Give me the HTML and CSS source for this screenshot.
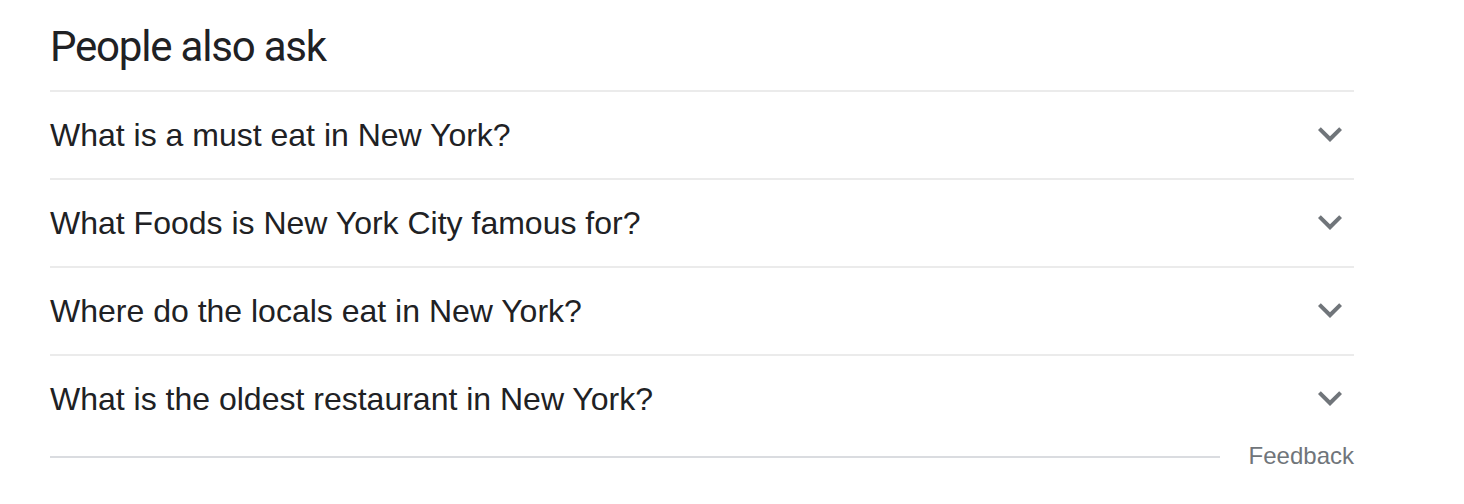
FILE: index.html
```html
<!DOCTYPE html>
<html>
<head>
<meta charset="utf-8">
<link rel="stylesheet" href="styles.css">
</head>
<body>
<div class="paa">
  <h2 class="paa-title">People also ask</h2>
  <div class="paa-list">
    <div class="paa-row">
      <span class="paa-q">What is a must eat in New York?</span>
      <svg class="chev" viewBox="0 0 24 24" width="48" height="48"><path d="M16.59 8.59L12 13.17 7.41 8.59 6 10l6 6 6-6z"/></svg>
    </div>
    <div class="paa-row">
      <span class="paa-q">What Foods is New York City famous for?</span>
      <svg class="chev" viewBox="0 0 24 24" width="48" height="48"><path d="M16.59 8.59L12 13.17 7.41 8.59 6 10l6 6 6-6z"/></svg>
    </div>
    <div class="paa-row">
      <span class="paa-q">Where do the locals eat in New York?</span>
      <svg class="chev" viewBox="0 0 24 24" width="48" height="48"><path d="M16.59 8.59L12 13.17 7.41 8.59 6 10l6 6 6-6z"/></svg>
    </div>
    <div class="paa-row">
      <span class="paa-q">What is the oldest restaurant in New York?</span>
      <svg class="chev" viewBox="0 0 24 24" width="48" height="48"><path d="M16.59 8.59L12 13.17 7.41 8.59 6 10l6 6 6-6z"/></svg>
    </div>
  </div>
  <div class="paa-foot">
    <div class="foot-line"></div>
    <span class="feedback">Feedback</span>
  </div>
</div>
</body>
</html>
```
FILE: styles.css
```css
html, body {
  margin: 0;
  padding: 0;
  background: #fff;
}
.paa {
  width: 1304px;
  margin-left: 50px;
  font-family: "Liberation Sans", Arial, sans-serif;
  color: #202124;
}
.paa-title {
  margin: 0;
  height: 90px;
  box-sizing: border-box;
  padding-top: 21px;
  font-family: Roboto, "Open Sans", sans-serif;
  font-weight: 400;
  font-size: 42px;
  letter-spacing: -1.2px;
  line-height: 52px;
  color: #202124;
}
.paa-row {
  display: flex;
  align-items: center;
  justify-content: space-between;
  height: 88px;
  box-sizing: border-box;
  border-top: 2px solid #ebebeb;
}
.paa-q {
  font-size: 32px;
  line-height: 44px;
  color: #202124;
}
.chev {
  fill: #70757a;
  margin-top: -2px;
}
.paa-foot {
  display: flex;
  align-items: center;
  height: 28px;
}
.foot-line {
  flex: 1;
  height: 2px;
  background: #dadce0;
  margin-top: 2px;
  margin-right: 29px;
}
.feedback {
  font-size: 24px;
  line-height: 28px;
  color: #70757a;
}
```
